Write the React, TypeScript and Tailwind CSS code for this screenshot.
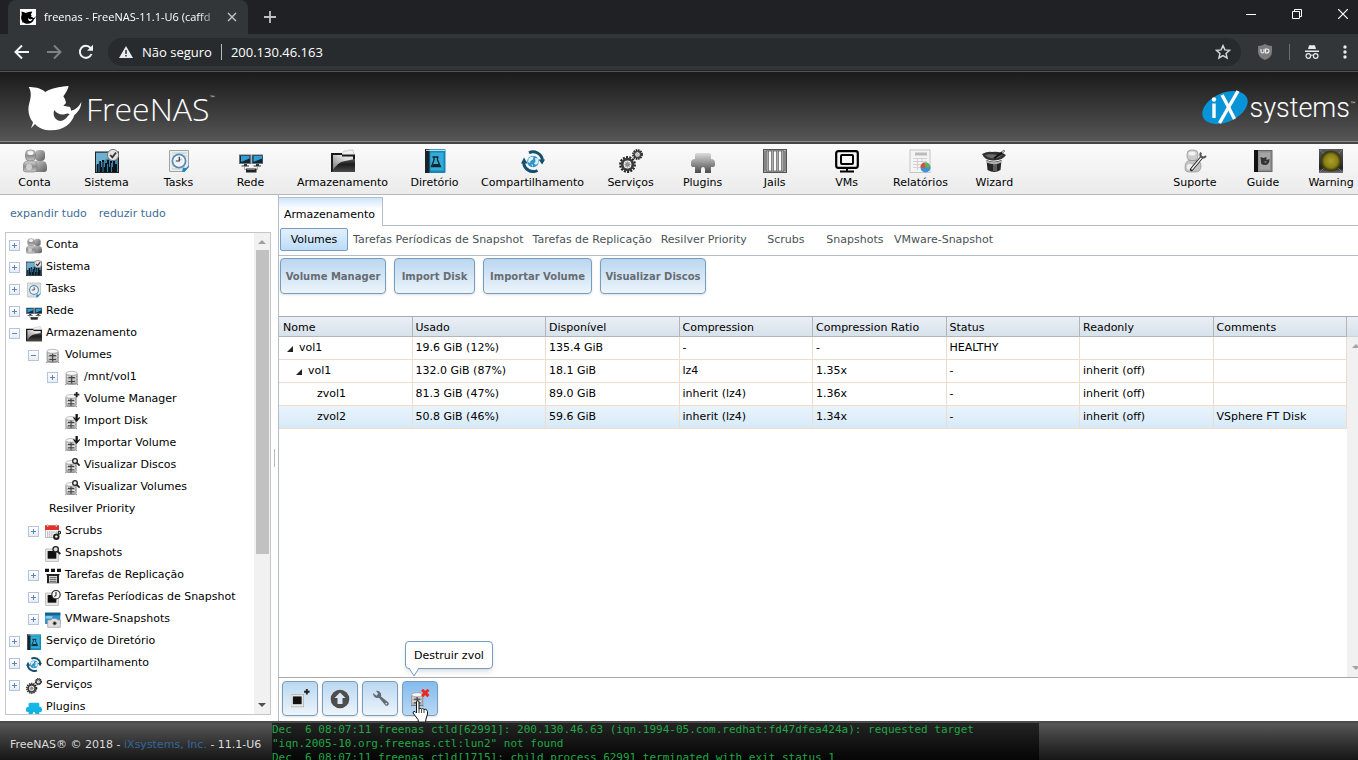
import React from "react";

type IconProps = { size?: number };
type IconType = (p: IconProps) => React.ReactElement;

function Svg({ size = 24, children }: { size?: number; children: React.ReactNode }) {
  return (
    <svg width={size} height={size} viewBox="0 0 24 24" fill="none" className="block shrink-0" aria-hidden="true">
      {children}
    </svg>
  );
}

/* ---------- section icons ---------- */

const UsersIcon: IconType = ({ size }) => (
  <Svg size={size}>
    <defs>
      <linearGradient id="usersA" x1="0" y1="0" x2="0" y2="1">
        <stop offset="0" stopColor="#d8d8d8" />
        <stop offset="0.5" stopColor="#8d8d8d" />
        <stop offset="1" stopColor="#c9c9c9" />
      </linearGradient>
      <linearGradient id="usersB" x1="0" y1="0" x2="1" y2="1">
        <stop offset="0" stopColor="#c4c4c4" />
        <stop offset="1" stopColor="#5e5e5e" />
      </linearGradient>
    </defs>
    <rect x="12" y="1" width="10" height="11" rx="4" fill="url(#usersB)" />
    <path d="M12 12h7q5 0 5 6v2q0 3-3 3h-9z" fill="url(#usersB)" />
    <rect x="2.500" y="1" width="10" height="11" rx="4" fill="url(#usersA)" stroke="#777" strokeWidth="0.600" />
    <path d="M5 12h5q4 0 4 6v2q0 3-3 3H3q-3 0-3-3v-2q0-6 5-6z" fill="url(#usersA)" stroke="#777" strokeWidth="0.600" />
    <ellipse cx="7.500" cy="4" rx="3" ry="2" fill="#f4f4f4" />
    <ellipse cx="6" cy="18" rx="3" ry="3" fill="#e6e6e6" opacity="0.700" />
  </Svg>
);

const SystemIcon: IconType = ({ size }) => (
  <Svg size={size}>
    <rect x="0.500" y="3" width="23" height="20.500" fill="#3d87ac" stroke="#222" />
    <path d="M1 4h14v4L1 16z" fill="#6fb0cf" />
    <path d="M2 23v-8h2v-3h2v6h1V11h2v7h1v-4h2v-3h2v7h1v-6h2v6h1v-8h2v5h2v8z" fill="#0b1319" />
    <path d="M4 12v11M8 13v10M12.500 15v8M16.500 14v9" stroke="#3b8ab8" strokeWidth="0.900" />
    <circle cx="18" cy="6" r="5.600" fill="#e3e3e3" stroke="#777" />
    <path d="M15.200 6l2.200 2.400L21 3.500" stroke="#333" strokeWidth="1.800" />
  </Svg>
);

const TasksIcon: IconType = ({ size }) => (
  <Svg size={size}>
    <path d="M2.500 1.500h19V17l-4 5.500h-15z" fill="#eceeed" stroke="#9aa7a5" />
    <path d="M5 4h15M5 7h15M5 17h13M5 20h11" stroke="#c4cecd" />
    <circle cx="12" cy="12" r="6.600" fill="#fff" stroke="#5a8bb5" strokeWidth="1.800" />
    <circle cx="12" cy="12" r="4.400" fill="#e9f1f7" />
    <path d="M12.300 7.800V12H8.800" stroke="#334" strokeWidth="1.200" />
    <path d="M12 12l2.500-2" stroke="#c33" strokeWidth="0.700" />
    <path d="M22 16.500V18l-4.500 5H15l1-4.500 3 .5z" fill="#2486bf" />
  </Svg>
);

const NetworkIcon: IconType = ({ size }) => (
  <Svg size={size}>
    <rect x="0.500" y="6" width="11" height="8.500" fill="#0d2836" stroke="#68737a" />
    <rect x="13" y="6" width="11" height="8.500" fill="#0d2836" stroke="#68737a" />
    <path d="M2 7h8.500v2.500L2 13zM14.500 7H23v2.500L14.500 13z" fill="#2e9fd6" />
    <path d="M5 15h3v1.500H5zM17 15h3v1.500h-3zM2.500 16.500H10v1H2.500zM14.500 16.500H22v1h-7.500z" fill="#333" />
    <path d="M5.500 18v2.500h13V18" stroke="#aaa" />
    <rect x="7" y="19.500" width="10.500" height="4" fill="#222" />
    <path d="M8 20.500h8" stroke="#999" strokeWidth="0.700" />
  </Svg>
);

const StorageIcon: IconType = ({ size }) => (
  <Svg size={size}>
    <defs>
      <linearGradient id="folder" x1="0" y1="1" x2="1" y2="0">
        <stop offset="0" stopColor="#777" />
        <stop offset="0.700" stopColor="#e2e2e2" />
      </linearGradient>
      <linearGradient id="folderFront" x1="0" y1="0" x2="0" y2="1">
        <stop offset="0" stopColor="#555" />
        <stop offset="0.400" stopColor="#1c1c1c" />
        <stop offset="1" stopColor="#4a4a4a" />
      </linearGradient>
    </defs>
    <path d="M11 5l2-3h4l1-1h4l1 4v4H11z" fill="#f1f1f1" stroke="#bbb" strokeWidth="0.700" />
    <path d="M0 4h11v1.500h13V23H0z" fill="#1a1a1a" />
    <path d="M2 21V6h9v1.500h11V11z" fill="url(#folder)" />
    <path d="M1 23Q6 13 14 12l10-2v13z" fill="url(#folderFront)" />
  </Svg>
);

const DirectoryIcon: IconType = ({ size }) => (
  <Svg size={size}>
    <rect x="2" y="0" width="20.500" height="24" rx="1" fill="#1488b4" />
    <rect x="2" y="0" width="4.500" height="24" fill="#1b2328" />
    <path d="M3 1.300h19" stroke="#dff3fb" />
    <rect x="7.500" y="3.500" width="13" height="18" fill="#32acd8" />
    <path d="M9.500 8h6M11 8v3l-2.500 6.500h9L14.500 11V8" stroke="#10242e" strokeWidth="1.300" />
    <path d="M10.500 15h5.200l1 2.200H9.300z" fill="#10242e" />
  </Svg>
);

const SharingIcon: IconType = ({ size }) => (
  <Svg size={size}>
    <path d="M8 3.800A9.600 9.600 0 0 1 21.500 11" stroke="#17506e" strokeWidth="3" />
    <path d="M17.500 10.500h6.500l-2.800 5z" fill="#17506e" />
    <path d="M16.500 21.500A9.600 9.600 0 0 1 2.700 14" stroke="#17506e" strokeWidth="3" />
    <path d="M0 14.500h6.500L3 8.500z" fill="#17506e" />
    <circle cx="12" cy="12.500" r="5.800" fill="#2e93c9" />
    <path d="M7.500 9.500q2.500-2.500 5-2l-.5 3-2.500 1.500-.5 2-2-1zM14 9l3 .5.500 4-2.500 2.500-2-1.500 1.500-2zM10 15l2 1v2z" fill="#dceff8" />
  </Svg>
);

const ServicesIcon: IconType = ({ size }) => (
  <Svg size={size}>
    <circle cx="8.500" cy="15.500" r="7.300" stroke="#222" strokeWidth="2.200" strokeDasharray="2 1.270" />
    <circle cx="8.500" cy="15.500" r="5.300" stroke="#3a3a3a" strokeWidth="2.800" />
    <circle cx="8.500" cy="15.500" r="2.500" fill="#777" stroke="#ccc" strokeWidth="0.800" />
    <path d="M8.500 11v9M4 15.500h9M5.500 12.500l6 6M11.500 12.500l-6 6" stroke="#999" strokeWidth="0.600" />
    <circle cx="18.500" cy="5.500" r="4.500" stroke="#222" strokeWidth="1.800" strokeDasharray="1.600 0.756" />
    <circle cx="18.500" cy="5.500" r="3.200" stroke="#444" strokeWidth="1.800" />
    <circle cx="18.500" cy="5.500" r="1.500" fill="#bbb" />
  </Svg>
);

function PluginShape({ size, from, to }: { size?: number; from: string; to: string }) {
  const id = "plug" + from.slice(1);
  return (
    <Svg size={size}>
      <defs>
        <linearGradient id={id} x1="0" y1="0" x2="0" y2="1">
          <stop offset="0" stopColor={from} />
          <stop offset="1" stopColor={to} />
        </linearGradient>
      </defs>
      <path
        d="M6 4h12q2 0 2 2v4q4 0 4 4v2q0 2-3 2h-1v6h-6v-3q0-3-2-3t-2 3v3H4v-6H3q-3 0-3-2v-2q0-4 4-4V6q0-2 2-2z"
        fill={`url(#${id})`}
      />
    </Svg>
  );
}
const PluginsIcon: IconType = ({ size }) => <PluginShape size={size} from="#dcdcdc" to="#4a4a4a" />;
const PluginsBlueIcon: IconType = ({ size }) => <PluginShape size={size} from="#16b9e8" to="#10aee0" />;

const JailsIcon: IconType = ({ size }) => (
  <Svg size={size}>
    <rect x="0.500" y="0.500" width="23" height="23" fill="#868686" stroke="#555" />
    <rect x="3" y="2.500" width="18" height="19" fill="#fafafa" />
    <path d="M4.500 2v20M9.500 2v20M14.500 2v20M19.500 2v20" stroke="#555" strokeWidth="2.400" />
    <path d="M4.500 2v20M9.500 2v20M14.500 2v20M19.500 2v20" stroke="#aaa" strokeWidth="1" />
    <path d="M1.500 1.500h1M21.500 1.500h1M1.500 22.500h1M21.500 22.500h1" stroke="#ddd" />
  </Svg>
);

const VmsIcon: IconType = ({ size }) => (
  <Svg size={size}>
    <rect x="1.200" y="2.200" width="21.600" height="16.600" rx="2" stroke="#000" strokeWidth="2.200" />
    <rect x="6" y="6" width="12" height="9" rx="1" stroke="#000" strokeWidth="2" />
    <path d="M5 22.500h14M12 19v3" stroke="#000" strokeWidth="2" />
  </Svg>
);

const ReportsIcon: IconType = ({ size }) => (
  <Svg size={size}>
    <rect x="2" y="1" width="20" height="22.500" fill="#f4f4f4" stroke="#c6c6c6" />
    <rect x="7" y="3.500" width="12" height="3" fill="#bbb" />
    <path d="M5 9.500h14M5 12.500h14M5 15.500h8M5 18.500h7M9.500 9v12M14 9v5" stroke="#d2d2d2" />
    <circle cx="17.500" cy="18.500" r="5" fill="#3d93d6" />
    <path d="M17.500 18.500h-5a5 5 0 0 1 4-4.900z" fill="#e8492c" />
    <path d="M17.500 18.500l-1-4.900a5 5 0 0 1 6 4.900z" fill="#62b34c" />
  </Svg>
);

const WizardIcon: IconType = ({ size }) => (
  <Svg size={size}>
    <path d="M4.500 11q7 3.500 15 0l-1 10q-6 4-13 0z" fill="#262626" />
    <path d="M11 14h4v8h-4z" fill="#5c5c5c" />
    <path d="M4.500 11.500q7 3.500 15 0v2q-7 3.500-15 0z" fill="#b5b5b5" />
    <path d="M0 5q6-3 10-2 8-1 14 3-3 5-12 5.500Q3 12 0 5z" fill="#333" />
    <path d="M3 6.500q4-2 9-1t8 1q-4 3-8 3T3 6.500z" fill="#6c6c6c" />
    <path d="M12 9.500L22.500 1.500" stroke="#111" strokeWidth="1.800" />
    <path d="M20 3.500l2.500-2" stroke="#ccc" strokeWidth="1.300" />
  </Svg>
);

const SupportIcon: IconType = ({ size }) => (
  <Svg size={size}>
    <rect x="4" y="1" width="11" height="10.500" rx="4" fill="#cdcdcd" stroke="#888" strokeWidth="0.600" />
    <path d="M6 11.500h7q5 0 5 5.500t-5 6H5q-3 0-3-4 0-7 4-7.500z" fill="#c3c3c3" stroke="#888" strokeWidth="0.600" />
    <ellipse cx="9" cy="4.500" rx="3.500" ry="2" fill="#f2f2f2" />
    <ellipse cx="7" cy="18" rx="3.500" ry="3" fill="#efefef" />
    <path d="M8.500 20.500L18.500 8.500" stroke="#222" strokeWidth="3.400" strokeLinecap="round" />
    <path d="M9 20L19 8" stroke="#eee" strokeWidth="1.600" strokeLinecap="round" />
    <path d="M18 3.500q-1.500 3 .5 4.500t4.500-1" stroke="#555" strokeWidth="2" />
  </Svg>
);

const GuideIcon: IconType = ({ size }) => (
  <Svg size={size}>
    <rect x="3.500" y="1.500" width="17.500" height="21" fill="#8f8f8f" stroke="#666" />
    <rect x="3" y="1" width="4" height="22" fill="#111" />
    <rect x="8.500" y="3.500" width="10.500" height="17" fill="#a5a5a5" />
    <path d="M9.500 8l3 1 3-1v3l3-1q0 6-4.500 6T10 13z" fill="#333" />
    <path d="M13.500 13h2" stroke="#aaa" />
  </Svg>
);

const WarningIcon: IconType = ({ size }) => (
  <Svg size={size}>
    <defs>
      <radialGradient id="lamp">
        <stop offset="0" stopColor="#aaa034" />
        <stop offset="0.700" stopColor="#8a8012" />
        <stop offset="1" stopColor="#3d3a08" />
      </radialGradient>
      <linearGradient id="lampBox" x1="0" y1="0" x2="0" y2="1">
        <stop offset="0" stopColor="#5c5c5c" />
        <stop offset="0.800" stopColor="#222" />
        <stop offset="1" stopColor="#777" />
      </linearGradient>
    </defs>
    <rect width="24" height="24" fill="url(#lampBox)" />
    <path d="M1 1l4 4M23 1l-4 4M1 23l4-4M23 23l-4-4" stroke="#777" />
    <circle cx="12" cy="12" r="10.500" fill="#3c3b24" />
    <circle cx="12" cy="12" r="9.500" fill="url(#lamp)" />
  </Svg>
);

/* ---------- tree icons ---------- */

function DiskStack() {
  return (
    <>
      <path d="M3 5v15q8 4.500 17 0V5z" fill="#b9b9b9" />
      <ellipse cx="11.500" cy="5" rx="8.500" ry="3" fill="#f7f7f7" stroke="#999" />
      <path d="M3 6v14M20 6v14" stroke="#8a8a8a" />
      <path d="M3 9.500q8 4 17 0M3 14.500q8 4 17 0" stroke="#777" />
      <path d="M4 8.500q7 3 14 0v2q-7 3-14 0zM4 13.500q7 3 14 0v2q-7 3-14 0z" fill="#e9e9e9" />
      <path d="M6.500 11.500h10M11.500 8.500v12M6.500 17h10" stroke="#444" strokeWidth="1.800" />
      <path d="M2 22q2-2 4-1h11q2-1 4 1" stroke="#777" strokeWidth="1.600" />
    </>
  );
}
const VolumeIcon: IconType = ({ size }) => (
  <Svg size={size}>
    <DiskStack />
  </Svg>
);
const VolumeAddIcon: IconType = ({ size }) => (
  <Svg size={size}>
    <g transform="translate(0 2) scale(.92)">
      <DiskStack />
    </g>
    <path d="M19 0v8M15 4h8" stroke="#222" strokeWidth="2.800" />
  </Svg>
);
const VolumeImportIcon: IconType = ({ size }) => (
  <Svg size={size}>
    <g transform="translate(0 2) scale(.92)">
      <DiskStack />
    </g>
    <path d="M19 0v8" stroke="#111" strokeWidth="3.400" />
    <path d="M13 5h2l4 3 4-3h2L19 12z" fill="#111" />
  </Svg>
);
const VolumeViewIcon: IconType = ({ size }) => (
  <Svg size={size}>
    <g transform="translate(0 2) scale(.92)">
      <DiskStack />
    </g>
    <circle cx="16.500" cy="4.500" r="3.500" fill="#eee" stroke="#222" strokeWidth="2" />
    <path d="M19 7l4.500 4.500" stroke="#222" strokeWidth="2.800" />
  </Svg>
);
const VolumeDeleteIcon: IconType = ({ size }) => (
  <Svg size={size}>
    <g transform="translate(-2 3) scale(.85)">
      <DiskStack />
    </g>
    <path d="M14 1l8 8M22 1l-8 8" stroke="#f0261c" strokeWidth="3.600" />
  </Svg>
);
const ScrubsIcon: IconType = ({ size }) => (
  <Svg size={size}>
    <rect x="0.500" y="3" width="20" height="17" fill="#fff" stroke="#999" />
    <rect x="0" y="2" width="21" height="7" fill="#e0332c" />
    <path d="M4 0v4M17 0v4" stroke="#c9c9c9" strokeWidth="2" />
    <path d="M3 12h15M3 15h10M3 18h8" stroke="#888" strokeDasharray="2 1.200" strokeWidth="1.500" />
    <circle cx="17" cy="19" r="3.400" stroke="#222" strokeWidth="3" />
    <circle cx="21.500" cy="13" r="1.800" stroke="#222" strokeWidth="1.800" />
  </Svg>
);
function Frame() {
  return (
    <>
      <rect x="1" y="4.500" width="19" height="18.500" fill="#e6e6e6" stroke="#aaa" />
      <rect x="4" y="7.500" width="13" height="11.500" fill="#111" />
    </>
  );
}
const SnapshotIcon: IconType = ({ size }) => (
  <Svg size={size}>
    <Frame />
    <circle cx="16" cy="5" r="4" fill="#ddd" stroke="#222" strokeWidth="2" />
    <path d="M18.500 8l4.500 4" stroke="#222" strokeWidth="3" />
  </Svg>
);
const SnapshotAddIcon: IconType = ({ size }) => (
  <Svg size={size}>
    <g transform="translate(-1 3) scale(.85)">
      <Frame />
    </g>
    <path d="M20 0v7M16.500 3.500h7" stroke="#222" strokeWidth="2.400" />
  </Svg>
);
const ReplicationIcon: IconType = ({ size }) => (
  <Svg size={size}>
    <path d="M0 1h6v5H0zM9 1h6v5H9zM18 1h6v5h-6z" fill="#111" />
    <path d="M2 9h20l-1 3v11H3V12z" fill="#222" />
    <path d="M6 12h12v10H6z" fill="#d9d9d9" />
    <path d="M7 14.500h10M7 17.500h10M7 20.500h10" stroke="#555" strokeWidth="1.400" />
  </Svg>
);
const PeriodicIcon: IconType = ({ size }) => (
  <Svg size={size}>
    <Frame />
    <circle cx="16.500" cy="7" r="6.300" fill="#f6f6f6" stroke="#333" strokeWidth="1.800" />
    <path d="M16.500 3v5l-2.500 2" stroke="#222" strokeWidth="1.600" />
  </Svg>
);
const VmwareIcon: IconType = ({ size }) => (
  <Svg size={size}>
    <rect x="0" y="1" width="23" height="17" fill="#2f94cc" />
    <path d="M0 1h23v4H0z" fill="#14618f" />
    <path d="M1 6h10v4H1z" fill="#8cc8e8" />
    <path d="M4 12h5l2-2h6l2 2h4v11H4z" fill="#e0e0e0" stroke="#999" />
    <circle cx="14.500" cy="17" r="3.600" fill="#666" stroke="#eee" />
    <circle cx="14.500" cy="17" r="1.500" fill="#111" />
  </Svg>
);

/* ---------- logos ---------- */

function Shark({ width, height, color }: { width: number; height: number; color: string }) {
  return (
    <svg width={width} height={height} viewBox="84 256 162 138" className="block shrink-0" aria-hidden="true">
      <path
        fill={color}
        fillRule="evenodd"
        d="M86 262C100 262 122 264 136 277C150 267 178 261 206 259C203 270 198 280 190 290C194 296 197 302 198 310L190 318L210 322C212 325 213 329 213 333C226 331 238 320 244 306C244 322 236 336 223 346C215 372 190 392 154 392C132 392 116 385 105 373L93 386C95 380 98 374 99 368C86 352 82 330 88 310C93 293 95 276 86 262ZM163 331C158 343 162 356 173 362C185 367 197 360 203 350L209 344C205 340 199 341 194 344C181 347 170 341 163 331Z"
      />
    </svg>
  );
}

function IxLogo() {
  return (
    <svg width="46" height="36" viewBox="0 0 46 36" className="block shrink-0" aria-hidden="true">
      <ellipse cx="23" cy="17.500" rx="24" ry="14.500" transform="rotate(-24 23 17.500)" fill="#0a94d8" />
      <circle cx="12" cy="9.500" r="2.200" fill="#fff" />
      <path d="M12 13.500V28" stroke="#fff" strokeWidth="3.400" />
      <path d="M36 1L17.500 33" stroke="#fff" strokeWidth="3.400" />
      <path d="M20 5C24 12 28 20 32.500 29" stroke="#fff" strokeWidth="3.400" />
    </svg>
  );
}

/* ---------- browser frame ---------- */

function BrowserBar() {
  return (
    <div className="shrink-0 bg-[#202124] font-['Open_Sans',sans-serif] text-white">
      <div className="flex h-[34px] items-stretch justify-between">
        <div className="flex items-stretch pl-2">
          <div className="flex w-[240px] items-center rounded-t-lg bg-[#323639] pr-2 pl-3">
            <span className="flex size-4 items-center justify-center bg-white">
              <Shark width={15} height={13} color="#000" />
            </span>
            <span className="ml-2 flex-1 mask-r-from-88% text-[11px] leading-4 whitespace-nowrap">
              freenas - FreeNAS-11.1-U6 (caffd
            </span>
            <button aria-label="Fechar guia" className="ml-1 flex size-4 items-center justify-center">
              <svg width="10" height="10" viewBox="0 0 10 10" stroke="#c4c6c9" strokeWidth="1.400">
                <path d="M1 1l8 8M9 1L1 9" />
              </svg>
            </button>
          </div>
          <button aria-label="Nova guia" className="ml-3 flex w-5 items-center justify-center">
            <svg width="12" height="12" viewBox="0 0 12 12" stroke="#bfc1c4" strokeWidth="1.800">
              <path d="M6 0v12M0 6h12" />
            </svg>
          </button>
        </div>
        <div className="flex items-center pb-1.5">
          <button aria-label="Minimizar" className="flex w-[46px] justify-center">
            <svg width="10" height="10" viewBox="0 0 10 10" stroke="#fff">
              <path d="M0 5.500h10" />
            </svg>
          </button>
          <button aria-label="Restaurar" className="flex w-[46px] justify-center">
            <svg width="10" height="10" viewBox="0 0 10 10" fill="none" stroke="#fff">
              <path d="M.5 2.500h7v7h-7zM2.500 2.500v-2h7v7h-2" />
            </svg>
          </button>
          <button aria-label="Fechar" className="flex w-[38px] justify-center pl-2">
            <svg width="10" height="10" viewBox="0 0 10 10" stroke="#fff" strokeWidth="1.200">
              <path d="M0 0l10 10M10 0L0 10" />
            </svg>
          </button>
        </div>
      </div>
      <div className="flex h-9 items-center bg-[#323639] pl-3">
        <button aria-label="Voltar" className="flex size-5 items-center justify-center">
          <svg width="16" height="16" viewBox="0 0 16 16" fill="none" stroke="#f1f3f4" strokeWidth="2">
            <path d="M15 8H2M8 1.500L1.500 8 8 14.500" />
          </svg>
        </button>
        <button aria-label="Avançar" className="ml-3 flex size-5 items-center justify-center">
          <svg width="16" height="16" viewBox="0 0 16 16" fill="none" stroke="#7f8184" strokeWidth="2">
            <path d="M1 8h13M8 1.500L14.500 8 8 14.500" />
          </svg>
        </button>
        <button aria-label="Recarregar" className="ml-3 flex size-5 items-center justify-center">
          <svg width="16" height="16" viewBox="0 0 16 16" fill="none" stroke="#f1f3f4" strokeWidth="2">
            <path d="M13.500 10A6 6 0 1 1 12.500 4l1.500 1.500" />
            <path d="M9 6.800h6V.8z" fill="#f1f3f4" stroke="none" />
          </svg>
        </button>
        <div className="ml-3 flex h-7 flex-1 items-center rounded-full bg-[#282b2e] pr-[10px] pl-[11px]">
          <svg width="14" height="12" viewBox="0 0 14 12" aria-hidden="true">
            <path d="M7 0l7 12H0z" fill="#e8eaed" />
            <path d="M7 4v4M7 9v1.500" stroke="#282b2e" strokeWidth="1.500" />
          </svg>
          <label htmlFor="address" className="ml-[9px] text-[13px] leading-5">
            Não seguro
          </label>
          <span className="mx-[9px] h-4 w-px bg-[#b9bbbd]" />
          <input
            id="address"
            defaultValue="200.130.46.163"
            className="min-w-0 flex-1 bg-transparent text-[13px] leading-5 outline-none"
          />
          <svg width="16" height="16" viewBox="0 0 24 24" fill="none" stroke="#d3d5d8" strokeWidth="2.200" aria-hidden="true">
            <path d="M12 2.500l2.900 6.300 6.900.7-5.200 4.600 1.500 6.800L12 17.400l-6.100 3.500 1.500-6.800L2.200 9.500l6.900-.7z" />
          </svg>
        </div>
        <svg width="16" height="18" viewBox="0 0 16 18" className="ml-4" aria-hidden="true">
          <path d="M8 1q3 2 7 2v6q0 5-7 8-7-3-7-8V3q4 0 7-2z" fill="#7c7c7c" />
          <path d="M4 6v2.500q0 1.500 1.500 1.500T7 8.500V6M8.500 6v4h1Q12 10 12 8t-2-2z" stroke="#f0f0f0" strokeWidth="1.100" fill="none" />
        </svg>
        <span className="ml-4 h-4 w-px bg-[#6b6e71]" />
        <svg width="14" height="16" viewBox="0 0 14 16" className="ml-[15px]" aria-hidden="true">
          <path d="M4 1.500L5.500 1 7 1.600 8.500 1l1.500.5L11 5H3zM0 6.500h14V8H0z" fill="#e8eaed" />
          <path d="M5.500 11.500q1.500-1 3 0" stroke="#e8eaed" fill="none" />
          <circle cx="3.300" cy="12" r="2.300" stroke="#e8eaed" strokeWidth="1.200" fill="none" />
          <circle cx="10.700" cy="12" r="2.300" stroke="#e8eaed" strokeWidth="1.200" fill="none" />
        </svg>
        <button aria-label="Menu" className="mr-[5px] ml-[18px] flex w-4 justify-center">
          <svg width="4" height="14" viewBox="0 0 4 14" fill="#e8eaed">
            <circle cx="2" cy="2" r="1.700" />
            <circle cx="2" cy="7" r="1.700" />
            <circle cx="2" cy="12" r="1.700" />
          </svg>
        </button>
      </div>
      <div className="h-0.5 border-b border-[#565252] bg-[#242424]" />
    </div>
  );
}

/* ---------- page header ---------- */

function Masthead() {
  return (
    <header className="flex h-[70px] shrink-0 items-center justify-between border-b border-[#8e8e8e] bg-linear-to-b from-[#1b1b1b] to-[#565656] pt-0.5 pr-0.5 pl-7 text-white">
      <a href="#home" aria-label="FreeNAS" className="flex items-center">
        <Shark width={54} height={46} color="#fff" />
        <span className="ml-1 pt-0.5 font-['Open_Sans',sans-serif] text-[32px] leading-10 font-light">FreeNAS</span>
        <span className="-mt-5 text-[6px] leading-none">™</span>
      </a>
      <a href="#ixsystems" aria-label="iXsystems" className="flex items-center">
        <IxLogo />
        <span className="ml-0.5 font-[Roboto,sans-serif] text-[27px] leading-8 font-light">systems</span>
        <span className="-mt-2 text-[6px] leading-none">™</span>
      </a>
    </header>
  );
}

const sections: [string, IconType][] = [
  ["Conta", UsersIcon],
  ["Sistema", SystemIcon],
  ["Tasks", TasksIcon],
  ["Rede", NetworkIcon],
  ["Armazenamento", StorageIcon],
  ["Diretório", DirectoryIcon],
  ["Compartilhamento", SharingIcon],
  ["Serviços", ServicesIcon],
  ["Plugins", PluginsIcon],
  ["Jails", JailsIcon],
  ["VMs", VmsIcon],
  ["Relatórios", ReportsIcon],
  ["Wizard", WizardIcon],
];

const helpLinks: [string, IconType][] = [
  ["Suporte", SupportIcon],
  ["Guide", GuideIcon],
  ["Warning", WarningIcon],
];

function SectionBar() {
  return (
    <nav className="flex shrink-0 justify-between border-t-2 border-b border-t-[#444] border-b-[#b1b8c2] bg-linear-to-b from-[#fbfbfb] to-[#ebebeb]">
      <div className="-ml-px flex">
        {sections.map(([label, Icon]) => (
          <button key={label} className="flex min-w-[72px] flex-col items-center pt-[5px] pr-[11px] pb-[3px] pl-2.5">
            <Icon size={24} />
            <span className="mt-0.5 leading-4">{label}</span>
          </button>
        ))}
      </div>
      <div className="flex gap-6 pr-[5px]">
        {helpLinks.map(([label, Icon]) => (
          <button key={label} className="flex w-11 flex-col items-center pt-[5px] pb-[3px]">
            <Icon size={24} />
            <span className="mt-0.5 leading-4">{label}</span>
          </button>
        ))}
      </div>
    </nav>
  );
}

/* ---------- navigation tree ---------- */

type Node = { label: string; icon?: IconType; level: 0 | 1 | 2; toggle?: "+" | "-" };

const nodes: Node[] = [
  { label: "Conta", icon: UsersIcon, level: 0, toggle: "+" },
  { label: "Sistema", icon: SystemIcon, level: 0, toggle: "+" },
  { label: "Tasks", icon: TasksIcon, level: 0, toggle: "+" },
  { label: "Rede", icon: NetworkIcon, level: 0, toggle: "+" },
  { label: "Armazenamento", icon: StorageIcon, level: 0, toggle: "-" },
  { label: "Volumes", icon: VolumeIcon, level: 1, toggle: "-" },
  { label: "/mnt/vol1", icon: VolumeIcon, level: 2, toggle: "+" },
  { label: "Volume Manager", icon: VolumeAddIcon, level: 2 },
  { label: "Import Disk", icon: VolumeImportIcon, level: 2 },
  { label: "Importar Volume", icon: VolumeImportIcon, level: 2 },
  { label: "Visualizar Discos", icon: VolumeViewIcon, level: 2 },
  { label: "Visualizar Volumes", icon: VolumeViewIcon, level: 2 },
  { label: "Resilver Priority", level: 1 },
  { label: "Scrubs", icon: ScrubsIcon, level: 1, toggle: "+" },
  { label: "Snapshots", icon: SnapshotIcon, level: 1 },
  { label: "Tarefas de Replicação", icon: ReplicationIcon, level: 1, toggle: "+" },
  { label: "Tarefas Períodicas de Snapshot", icon: PeriodicIcon, level: 1, toggle: "+" },
  { label: "VMware-Snapshots", icon: VmwareIcon, level: 1, toggle: "+" },
  { label: "Serviço de Diretório", icon: DirectoryIcon, level: 0, toggle: "+" },
  { label: "Compartilhamento", icon: SharingIcon, level: 0, toggle: "+" },
  { label: "Serviços", icon: ServicesIcon, level: 0, toggle: "+" },
  { label: "Plugins", icon: PluginsBlueIcon, level: 0 },
];

const indent = { 0: "pl-[3px]", 1: "pl-[22px]", 2: "pl-[41px]" };

function Toggle({ kind }: { kind?: "+" | "-" }) {
  if (!kind) return <span className="w-[11px] shrink-0" />;
  return (
    <button
      aria-label={kind === "+" ? "Expandir" : "Reduzir"}
      className="flex size-[11px] shrink-0 items-center justify-center border border-[#b4c4dd] bg-linear-to-b from-white to-[#e6edf6]"
    >
      <svg width="5" height="5" viewBox="0 0 5 5" stroke="#6382b0">
        <path d={kind === "+" ? "M2.500 0v5M0 2.500h5" : "M0 2.500h5"} />
      </svg>
    </button>
  );
}

function ArrowUp({ color }: { color: string }) {
  return (
    <svg width="8" height="4" viewBox="0 0 8 4" fill={color} className="shrink-0">
      <path d="M4 0l4 4H0z" />
    </svg>
  );
}
function ArrowDown({ color }: { color: string }) {
  return (
    <svg width="8" height="4" viewBox="0 0 8 4" fill={color} className="shrink-0">
      <path d="M0 0h8L4 4z" />
    </svg>
  );
}

function Sidebar() {
  return (
    <aside className="flex w-[266px] shrink-0 flex-col pb-1.5">
      <div className="flex gap-3 px-[5px] pt-[11px] pb-2.5 leading-4 text-[#3f6d98]">
        <a href="#expand">expandir tudo</a>
        <a href="#collapse">reduzir tudo</a>
      </div>
      <div className="flex min-h-0 flex-1 border border-[#c4c6c8]">
        <ul className="min-w-0 flex-1 overflow-hidden pt-px">
          {nodes.map(({ label, icon: Icon, level, toggle }) => (
            <li key={label} className={`flex h-[22px] items-center ${indent[level]}`}>
              <Toggle kind={toggle} />
              {Icon ? (
                <span className="mr-1 ml-1.5 pt-0.5">
                  <Icon size={16} />
                </span>
              ) : (
                <span className="w-2.5" />
              )}
              <span className="whitespace-nowrap">{label}</span>
            </li>
          ))}
        </ul>
        <div className="flex w-4 flex-col items-center justify-between bg-[#f1f1f1] py-[7px]">
          <ArrowUp color="#a0a0a0" />
          <div className="flex w-[13px] flex-1 flex-col py-1.5">
            <div className="h-[68%] bg-[#c1c1c1]" />
          </div>
          <ArrowDown color="#505050" />
        </div>
      </div>
    </aside>
  );
}

/* ---------- storage panel ---------- */

const subTabs = [
  "Volumes",
  "Tarefas Períodicas de Snapshot",
  "Tarefas de Replicação",
  "Resilver Priority",
  "Scrubs",
  "Snapshots",
  "VMware-Snapshot",
];

const actions = ["Volume Manager", "Import Disk", "Importar Volume", "Visualizar Discos"];

const columns = ["Nome", "Usado", "Disponível", "Compression", "Compression Ratio", "Status", "Readonly", "Comments"];

const rows = [
  { depth: "pl-2", open: true, cells: ["vol1", "19.6 GiB (12%)", "135.4 GiB", "-", "-", "HEALTHY", "", ""] },
  { depth: "pl-[17px]", open: true, cells: ["vol1", "132.0 GiB (87%)", "18.1 GiB", "lz4", "1.35x", "-", "inherit (off)", ""] },
  { depth: "pl-[38px]", open: false, cells: ["zvol1", "81.3 GiB (47%)", "89.0 GiB", "inherit (lz4)", "1.36x", "-", "inherit (off)", ""] },
  {
    depth: "pl-[38px]",
    open: false,
    selected: true,
    cells: ["zvol2", "50.8 GiB (46%)", "59.6 GiB", "inherit (lz4)", "1.34x", "-", "inherit (off)", "VSphere FT Disk"],
  },
];

function VolumeTable() {
  return (
    <div className="flex min-h-0 flex-1 border-t border-b border-t-[#a9adb2] border-b-[#a9a9a9]">
      <div className="min-w-0 flex-1">
        <table className="w-full table-fixed border-separate border-spacing-0">
          <thead>
            <tr className="bg-linear-to-b from-[#eaeff6] to-[#d6e1e9]">
              {columns.map((c) => (
                <th
                  key={c}
                  scope="col"
                  className="h-5 border-r border-b border-[#b3b5b8] pt-0.5 pl-[3px] text-left leading-4 font-normal whitespace-nowrap first:pl-1"
                >
                  {c}
                </th>
              ))}
            </tr>
          </thead>
          <tbody>
            {rows.map((r, i) => (
              <tr key={i} className={r.selected ? "bg-linear-to-b from-[#e9f4fd] to-[#d6e9f8]" : "bg-white"}>
                {r.cells.map((c, j) => (
                  <td
                    key={j}
                    className={`h-[23px] border-r border-b border-[#f0dccd] leading-4 whitespace-nowrap ${j === 0 ? r.depth : "pl-[3px]"}`}
                  >
                    {j === 0 && r.open ? (
                      <span className="flex items-center gap-1.5">
                        <svg width="6" height="6" viewBox="0 0 6 6" fill="#222" className="mt-0.5" aria-hidden="true">
                          <path d="M6 0v6H0z" />
                        </svg>
                        {c}
                      </span>
                    ) : (
                      c
                    )}
                  </td>
                ))}
              </tr>
            ))}
          </tbody>
        </table>
      </div>
      <div className="flex w-[11px] flex-col overflow-hidden bg-[#f1f1f1]">
        <div className="h-5 shrink-0 border-b border-[#c9d3da] bg-linear-to-b from-[#eaeff6] to-[#d6e1e9]" />
        <div className="flex flex-1 flex-col justify-between py-[7px] pl-[5px]">
          <ArrowUp color="#a3a3a3" />
          <ArrowDown color="#a3a3a3" />
        </div>
      </div>
    </div>
  );
}

const toolButton =
  "flex h-[35px] w-9 items-center justify-center rounded-[4px] border border-[#759dc0] shadow-sm";
const plainFill = "bg-linear-to-b from-[#bad7f0] to-[#edf4fb]";

function ZvolToolbar() {
  return (
    <div className="flex h-[43px] items-start gap-1 pt-[3px] pl-[3px]">
      <button aria-label="Criar Snapshot" className={`${toolButton} ${plainFill}`}>
        <SnapshotAddIcon size={19} />
      </button>
      <button aria-label="Promover" className={`${toolButton} ${plainFill}`}>
        <svg width="20" height="20" viewBox="0 0 20 20" aria-hidden="true">
          <circle cx="10" cy="10" r="9.300" fill="#4d4d4d" />
          <path d="M10 3.500l5.500 5.500h-3v6h-5V9h-3z" fill="#dbe9f6" />
        </svg>
      </button>
      <button aria-label="Editar zvol" className={`${toolButton} ${plainFill}`}>
        <svg width="17" height="17" viewBox="0 0 17 17" aria-hidden="true">
          <path
            d="M1 3q0 4 3.500 5 1.500.3 2.500-.2l6 7.200q1.500 1.600 3 .2t.2-3L9 6.500Q9.700 3.500 7.700 1.800 6 .4 4 .8l2.200 3L4.500 5.800z"
            fill="#636a72"
          />
          <circle cx="14.300" cy="13.600" r="0.900" fill="#cfe0f0" />
        </svg>
      </button>
      <div className="relative">
        <button
          aria-label="Destruir zvol"
          aria-describedby="destroy-tip"
          className={`${toolButton} bg-linear-to-b from-[#84bbec] to-[#b9d8f4]`}
        >
          <VolumeDeleteIcon size={19} />
        </button>
        <div
          id="destroy-tip"
          role="tooltip"
          className="absolute bottom-[47px] left-[3px] rounded-[4px] border border-[#759dc0] bg-white px-2 pt-1.5 pb-1 leading-4 whitespace-nowrap shadow-md"
        >
          Destruir zvol
          <svg width="12" height="9" viewBox="0 0 12 9" className="absolute top-full left-0.5" aria-hidden="true">
            <path d="M1 0l5 8 5-8" fill="#fff" stroke="#759dc0" />
          </svg>
        </div>
        <svg width="17" height="23" viewBox="0 0 17 23" className="absolute top-[19px] left-[10px] z-10" aria-hidden="true">
          <path
            d="M4.500 1.500q1.500-1.500 2.500 0V9q1-1.500 2.500 0 1.500-1 2.500.5 2-1 3 .8.800 1 .500 3.700l-1.500 5-.5 3H6.500l-.5-2.500-5-6.500q0-2 2-1.500l1.500 1.500z"
            fill="#fff"
            stroke="#111"
          />
          <path d="M7 9v4M9.500 9.500V13M12 10v3" stroke="#111" strokeWidth="0.800" />
        </svg>
      </div>
    </div>
  );
}

function StoragePanel() {
  return (
    <main className="flex min-w-0 flex-1 flex-col border-l border-[#b5bcc7] bg-white">
      <div className="flex h-[31px] items-end pt-0.5" role="tablist" aria-label="Painéis">
        <button
          role="tab"
          aria-selected="true"
          className="h-[29px] border-t border-r border-[#b5bcc7] bg-linear-to-b from-[#cfe5fa] to-white to-40% pt-1.5 pr-[7px] pl-[5px] text-center leading-4 whitespace-nowrap"
        >
          Armazenamento
        </button>
        <span className="h-full flex-1 border-b border-[#b5bcc7]" />
      </div>
      <div
        className="flex h-[30px] items-start gap-px border-b border-[#b5bcc7] pt-0.5 pl-px text-[#495254]"
        role="tablist"
        aria-label="Armazenamento"
      >
        {subTabs.map((t, i) => (
          <button
            key={t}
            role="tab"
            aria-selected={i === 0}
            className={`h-[23px] min-w-[68px] border px-[3px] leading-4 whitespace-nowrap ${
              i === 0 ? "rounded-xs border-[#769dc0] bg-linear-to-b from-[#e3f0fc] to-[#bcdcf8] text-black" : "border-transparent"
            }`}
          >
            {t}
          </button>
        ))}
      </div>
      <div className="grid grid-cols-[106px_81px_109px_106px] gap-2 pt-0.5 pb-[22px] pl-px">
        {actions.map((a) => (
          <button
            key={a}
            className={`h-9 rounded-[4px] border border-[#759dc0] text-[10px] font-bold whitespace-nowrap text-[#666c72] shadow-sm ${plainFill}`}
          >
            {a}
          </button>
        ))}
      </div>
      <VolumeTable />
      <ZvolToolbar />
    </main>
  );
}

/* ---------- footer ---------- */

function Footer() {
  return (
    <footer className="flex h-[39px] shrink-0 overflow-hidden border-t-2 border-[#4b4b4b] bg-linear-to-b from-[#585858] to-[#161616]">
      <p className="w-[272px] shrink-0 pt-3.5 pl-2.5 leading-4 whitespace-nowrap text-[#dcdcdc]">
        FreeNAS® © 2018 -{" "}
        <a href="#ix" className="text-[#34669a]">
          iXsystems, Inc.
        </a>{" "}
        - 11.1-U6
      </p>
      <pre className="w-[767px] bg-linear-to-b from-[#242424] to-[#060606] font-['DejaVu_Sans_Mono',monospace] text-[11px] leading-[14px] text-[#1fa845]">
        {`Dec  6 08:07:11 freenas ctld[62991]: 200.130.46.63 (iqn.1994-05.com.redhat:fd47dfea424a): requested target
"iqn.2005-10.org.freenas.ctl:lun2" not found
Dec  6 08:07:11 freenas ctld[1715]: child process 62991 terminated with exit status 1`}
      </pre>
    </footer>
  );
}

export default function App() {
  return (
    <div className="flex h-screen flex-col overflow-hidden bg-white font-['DejaVu_Sans',sans-serif] text-[11px] text-black">
      <BrowserBar />
      <Masthead />
      <SectionBar />
      <div className="flex min-h-0 flex-1 pl-[5px]">
        <Sidebar />
        <div className="flex w-[7px] shrink-0 items-center pl-[3px]">
          <span className="h-[18px] w-px bg-[#b5bcc7]" />
        </div>
        <StoragePanel />
      </div>
      <Footer />
    </div>
  );
}
